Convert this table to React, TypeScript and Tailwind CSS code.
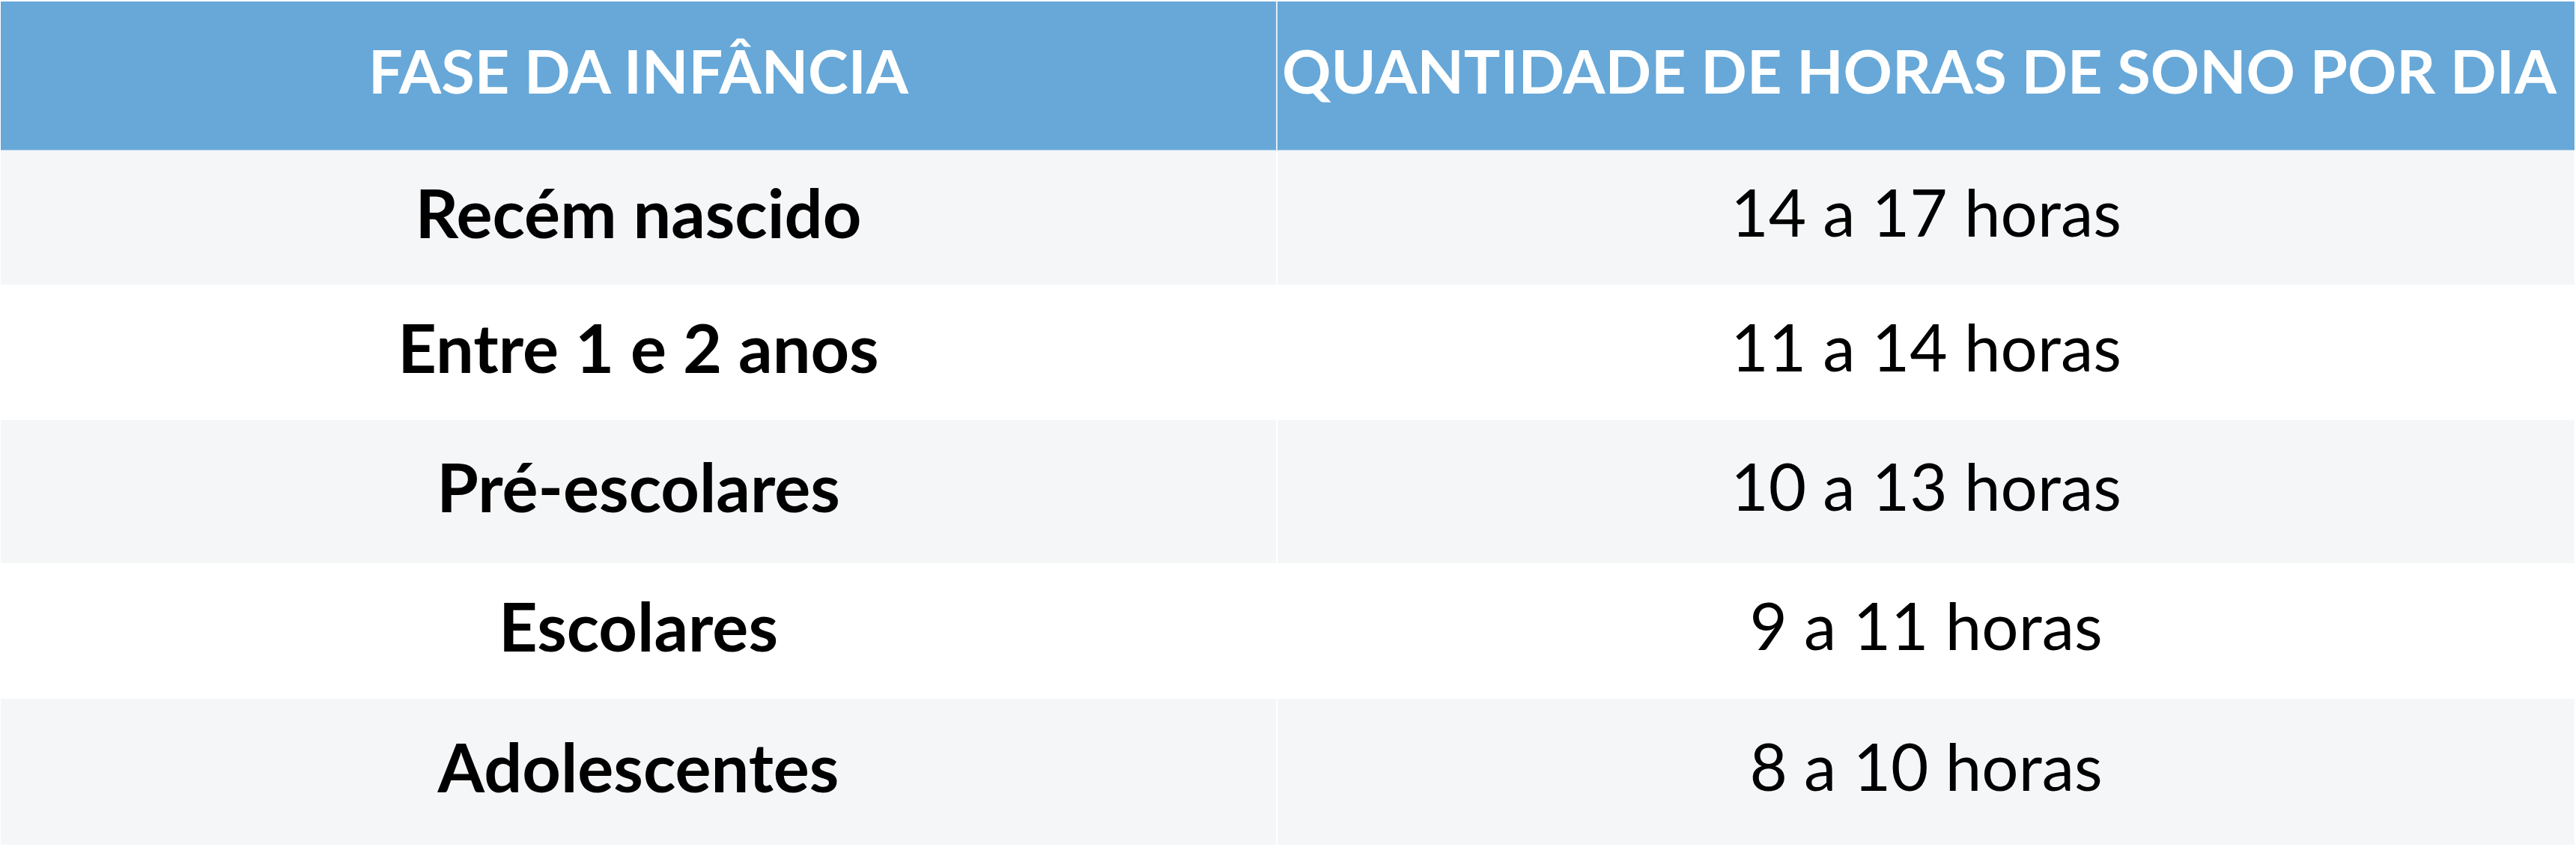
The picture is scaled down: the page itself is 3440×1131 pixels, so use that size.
import React from "react";

const rows: { fase: string; horas: string; gray: boolean; h: string }[] = [
  { fase: "Recém nascido", horas: "14 a 17 horas", gray: true, h: "h-[179px]" },
  { fase: "Entre 1 e 2 anos", horas: "11 a 14 horas", gray: false, h: "h-[181px]" },
  { fase: "Pré-escolares", horas: "10 a 13 horas", gray: true, h: "h-[191px]" },
  { fase: "Escolares", horas: "9 a 11 horas", gray: false, h: "h-[181px]" },
  { fase: "Adolescentes", horas: "8 a 10 horas", gray: true, h: "h-[195px]" },
];

export default function App() {
  return (
    <div
      className="w-[3440px] h-[1131px] bg-white pt-[2px] pl-[1px] overflow-hidden"
      style={{ fontFamily: "Lato, 'Open Sans', sans-serif" }}
    >
      <div className="w-[3437px] flex flex-col">
        <div className="flex h-[199px] bg-[#67a8d8] border-b border-[#b9d5ee]">
          <div className="w-[1703px] shrink-0 flex items-center justify-center pb-[16px]">
            <span className="text-white font-bold text-[81px] leading-none whitespace-nowrap">FASE DA INFÂNCIA</span>
          </div>
          <div className="w-[2px] shrink-0 bg-[#e3eef8]" />
          <div className="w-[1732px] shrink-0 flex items-center justify-center pb-[16px] pr-[18px]">
            <span className="text-white font-bold text-[81px] leading-none whitespace-nowrap">
              QUANTIDADE DE HORAS DE SONO POR DIA
            </span>
          </div>
        </div>
        {rows.map((r) => (
          <div key={r.fase} className={`flex ${r.h}`}>
            <div
              className={`w-[1703px] shrink-0 flex items-center justify-center pb-[16px] ${
                r.gray ? "bg-[#f5f6f8]" : "bg-white"
              }`}
            >
              <span className="text-black font-bold text-[90px] leading-none whitespace-nowrap">{r.fase}</span>
            </div>
            <div className="w-[2px] shrink-0 bg-white" />
            <div
              className={`w-[1732px] shrink-0 flex items-center justify-center pb-[16px] ${
                r.gray ? "bg-[#f5f6f8]" : "bg-white"
              }`}
            >
              <span className="text-black font-normal text-[87px] leading-none whitespace-nowrap">{r.horas}</span>
            </div>
          </div>
        ))}
      </div>
    </div>
  );
}
